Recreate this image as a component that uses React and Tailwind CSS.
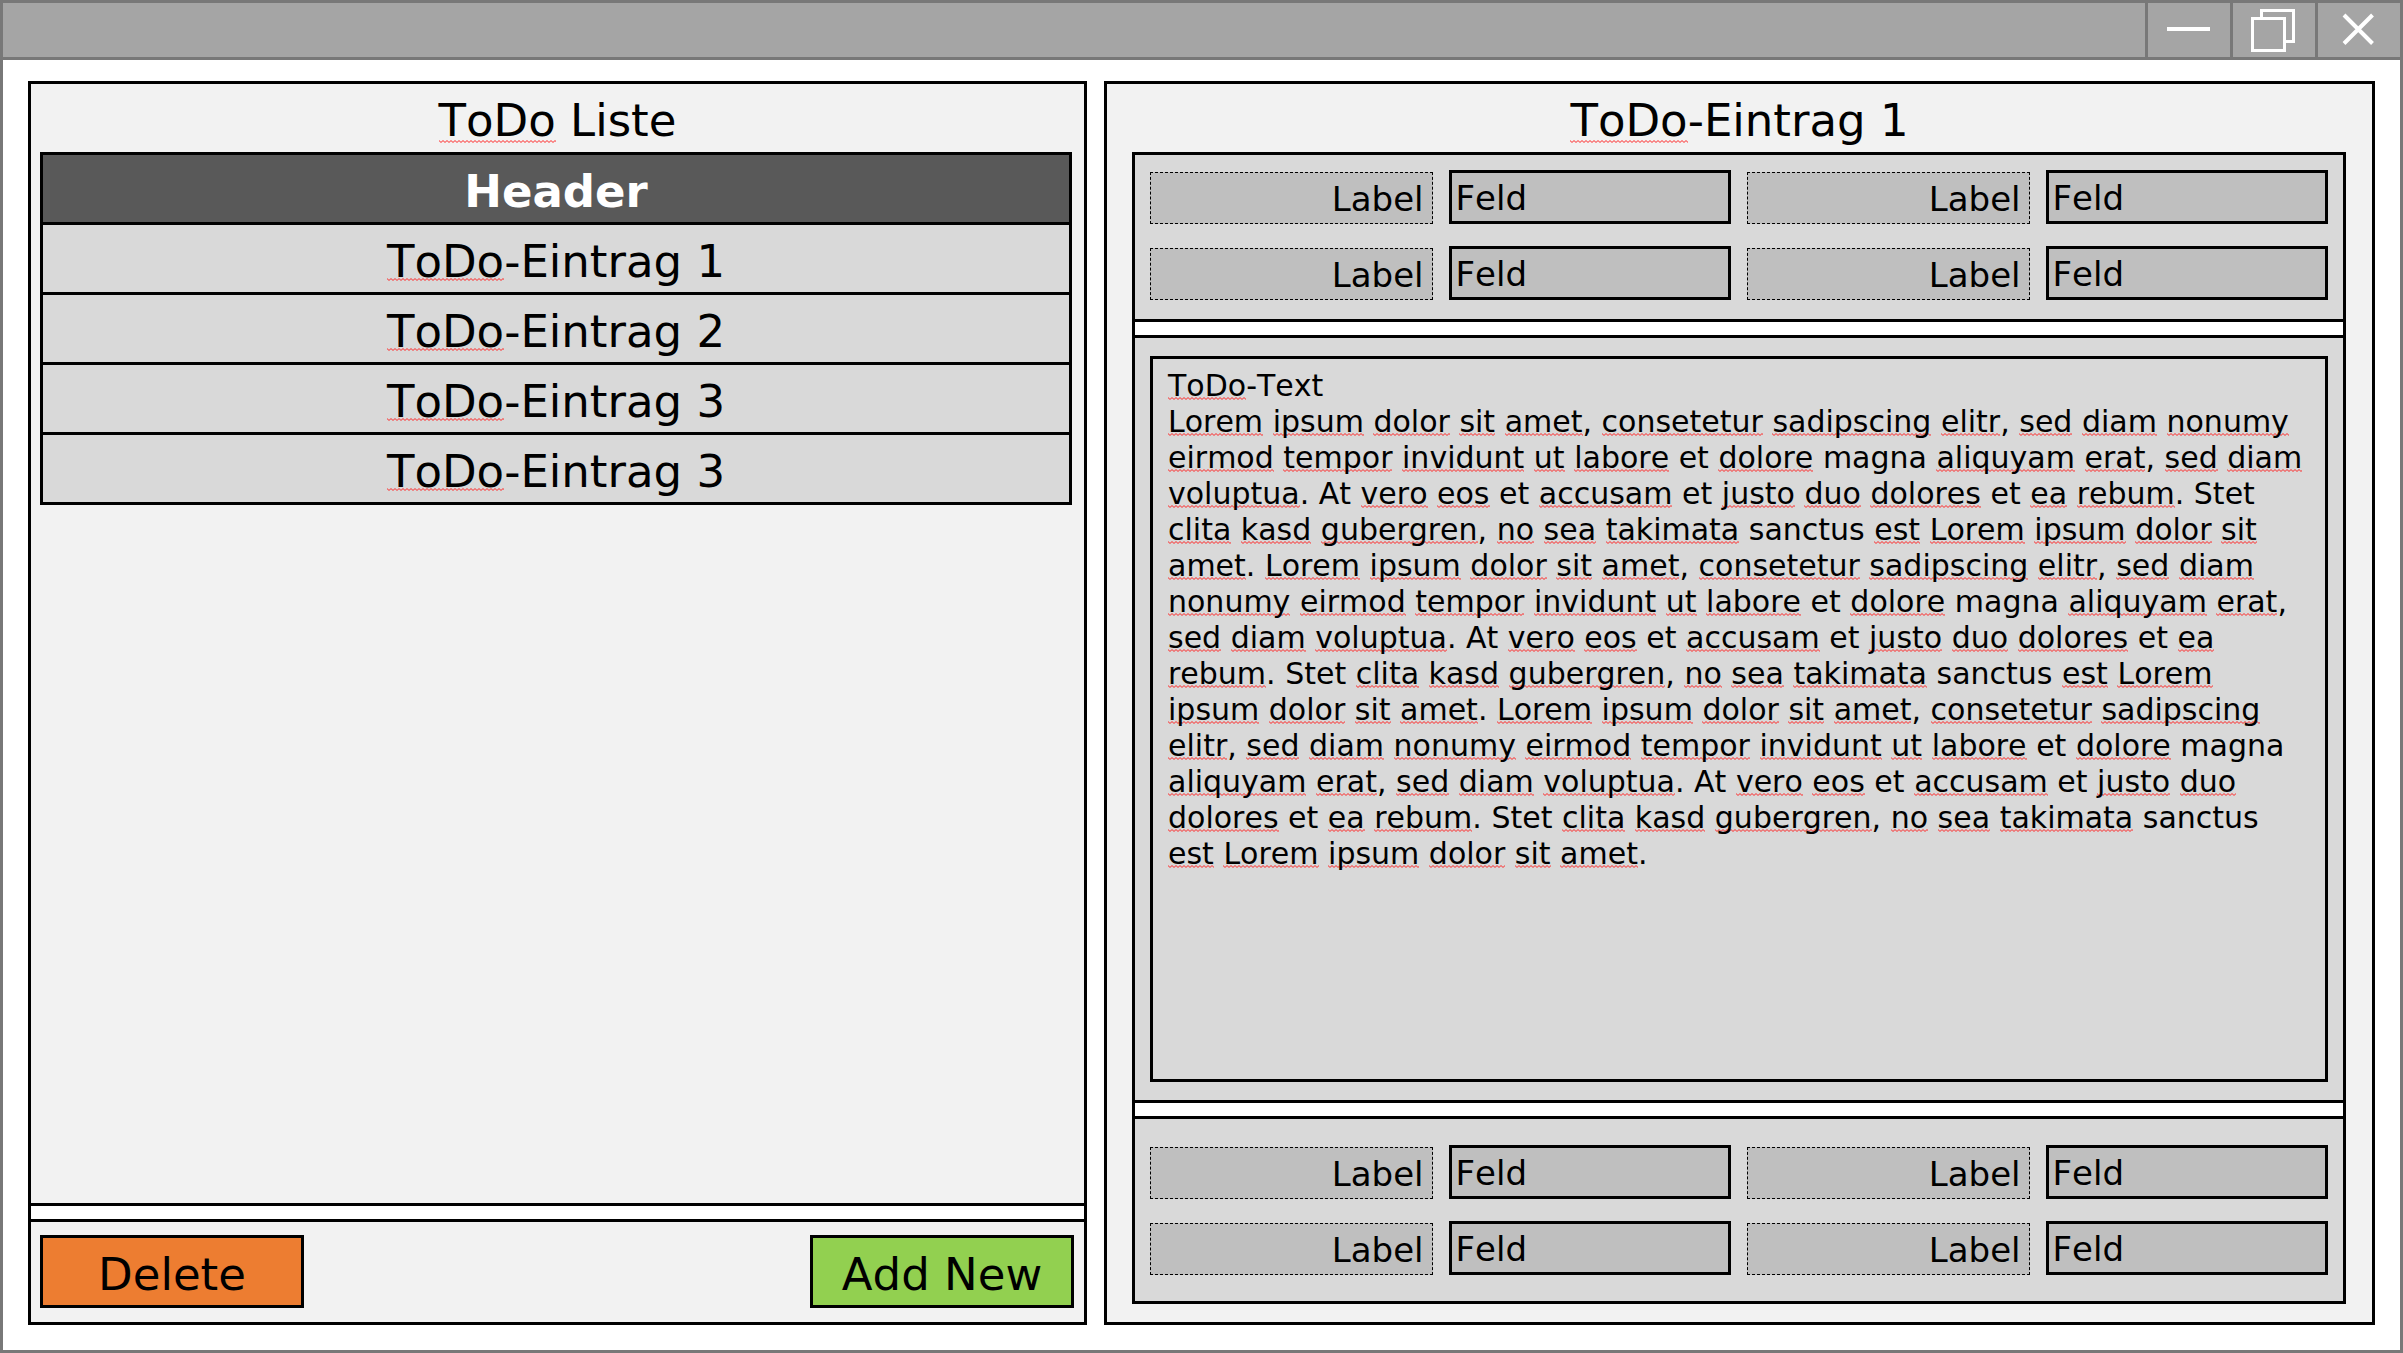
import React from "react";

const TEXT =
  "*Lorem *ipsum *dolor *sit *amet, *consetetur *sadipscing *elitr, *sed *diam *nonumy *eirmod *tempor *invidunt *ut *labore et *dolore magna *aliquyam *erat, *sed *diam *voluptua. At *vero *eos et *accusam et *justo *duo *dolores et *ea *rebum. Stet *clita *kasd *gubergren, *no *sea *takimata sanctus *est *Lorem *ipsum *dolor *sit *amet. *Lorem *ipsum *dolor *sit *amet, *consetetur *sadipscing *elitr, *sed *diam *nonumy *eirmod *tempor *invidunt *ut *labore et *dolore magna *aliquyam *erat, *sed *diam *voluptua. At *vero *eos et *accusam et *justo *duo *dolores et *ea *rebum. Stet *clita *kasd *gubergren, *no *sea *takimata sanctus *est *Lorem *ipsum *dolor *sit *amet. *Lorem *ipsum *dolor *sit *amet, *consetetur *sadipscing *elitr, *sed *diam *nonumy *eirmod *tempor *invidunt *ut *labore et *dolore magna *aliquyam *erat, *sed *diam *voluptua. At *vero *eos et *accusam et *justo *duo *dolores et *ea *rebum. Stet *clita *kasd *gubergren, *no *sea *takimata sanctus *est *Lorem *ipsum *dolor *sit *amet.";

const ENTRIES = ["-Eintrag 1", "-Eintrag 2", "-Eintrag 3", "-Eintrag 3"];

/* The zigzag tile repeats just below the text's baseline. */
function Misspelled({ children }) {
  return (
    <span className="bg-[url('data:image/svg+xml,%3Csvg%20xmlns=%22http://www.w3.org/2000/svg%22%20width=%224%22%20height=%223%22%3E%3Cpath%20d=%22M-1%201.5L0%20.5L2%202.5L4%20.5L5%201.5%22%20fill=%22none%22%20stroke=%22%23ff2020%22/%3E%3C/svg%3E')] bg-repeat-x [background-position:0_calc(0.93em+1px)]">
      {children}
    </span>
  );
}

/* Words that start with an asterisk get a spelling mark. */
function Proofed({ text }) {
  return text.split(" ").map((word, i) => {
    const match = word.match(/^\*(\w+)(.*)$/);
    return (
      <React.Fragment key={i}>
        {i > 0 && " "}
        {match ? (
          <>
            <Misspelled>{match[1]}</Misspelled>
            {match[2]}
          </>
        ) : (
          word
        )}
      </React.Fragment>
    );
  });
}

function WindowButton({ label, children }) {
  return (
    <button type="button" aria-label={label} className="flex w-[85px] items-center justify-center border-l-3 border-[#787878]">
      <svg viewBox="0 0 82 54" className="h-[54px] w-[82px]" fill="none" stroke="#fff" strokeWidth="3">
        {children}
      </svg>
    </button>
  );
}

function TitleBar() {
  return (
    <header className="flex h-[57px] justify-end border-b-3 border-[#787878] bg-[#a5a5a5]">
      <WindowButton label="Minimize">
        <path d="M19 26H62" strokeWidth="4" />
      </WindowButton>
      <WindowButton label="Restore">
        <path d="M28.500 14V7.500H60.500V38.500H53" />
        <path d="M19.500 15.500H51.500V47.500H19.500Z" />
      </WindowButton>
      <WindowButton label="Close">
        <path d="M26 12L54.500 40.500M54.500 12L26 40.500" strokeWidth="4" />
      </WindowButton>
    </header>
  );
}

function Divider() {
  return <div className="h-[19px] shrink-0 border-y-3 border-black bg-white" />;
}

function Title({ children }) {
  return <h1 className="flex h-[68px] shrink-0 items-center justify-center pt-1 text-[45px] leading-none">{children}</h1>;
}

function FieldPair({ id }) {
  return (
    <>
      <label
        htmlFor={id}
        className="flex h-[52px] items-center justify-end border border-dashed border-black bg-[#bfbfbf] pt-0.5 pr-2 text-[34px] leading-none"
      >
        Label
      </label>
      <input
        id={id}
        type="text"
        defaultValue="Feld"
        className="h-[54px] w-full min-w-0 border-3 border-black bg-[#bfbfbf] pt-0.5 pl-1 text-[34px] leading-none outline-none"
      />
    </>
  );
}

function FieldGrid({ name, className }) {
  return (
    <div className={`grid shrink-0 grid-cols-4 items-end gap-x-4 gap-y-[22px] px-[15px] ${className}`}>
      {[1, 2, 3, 4].map((n) => (
        <FieldPair key={n} id={`${name}-${n}`} />
      ))}
    </div>
  );
}

function ListPanel() {
  return (
    <section className="flex min-w-0 flex-col border-3 border-black bg-[#f2f2f2]">
      <Title>
        <Misspelled>ToDo</Misspelled>&nbsp;Liste
      </Title>
      <div className="grow pr-3 pl-[9px]">
        <table className="w-full border-separate border-spacing-0 border-t-3 border-l-3 border-black text-center text-[45px] leading-none">
          <thead>
            <tr>
              <th scope="col" className="h-[70px] border-r-3 border-b-3 border-black bg-[#595959] p-0 pt-1.5 font-bold text-white">
                Header
              </th>
            </tr>
          </thead>
          <tbody>
            {ENTRIES.map((entry, i) => (
              <tr key={i}>
                <td className="h-[70px] border-r-3 border-b-3 border-black bg-[#d9d9d9] p-0 pt-1.5">
                  <Misspelled>ToDo</Misspelled>
                  {entry}
                </td>
              </tr>
            ))}
          </tbody>
        </table>
      </div>
      <Divider />
      <footer className="flex shrink-0 justify-between pt-[13px] pr-2.5 pb-3.5 pl-[9px] text-[45px] leading-none">
        <button type="button" className="h-[73px] w-[264px] border-3 border-black bg-[#ed7d31] pt-1.5">
          Delete
        </button>
        <button type="button" className="h-[73px] w-[264px] border-3 border-black bg-[#92d050] pt-1.5">
          Add New
        </button>
      </footer>
    </section>
  );
}

function DetailPanel() {
  return (
    <section className="flex min-w-0 flex-col border-3 border-black bg-[#f2f2f2]">
      <Title>
        <Misspelled>ToDo</Misspelled>-Eintrag 1
      </Title>
      <div className="mr-[26px] mb-[18px] ml-[25px] flex grow flex-col border-3 border-black bg-[#d9d9d9]">
        <FieldGrid name="top" className="pt-[15px] pb-[19px]" />
        <Divider />
        <div className="flex grow flex-col px-[15px] py-[18px]">
          <div
            role="textbox"
            aria-multiline="true"
            aria-label="ToDo-Text"
            contentEditable
            suppressContentEditableWarning
            spellCheck={false}
            className="grow border-3 border-black px-[15px] py-[9px] text-[30px] leading-[36px] outline-none"
          >
            <p>
              <Misspelled>ToDo</Misspelled>-Text
            </p>
            <p>
              <Proofed text={TEXT} />
            </p>
          </div>
        </div>
        <Divider />
        <FieldGrid name="bottom" className="pt-[26px] pb-[26px]" />
      </div>
    </section>
  );
}

export default function App() {
  return (
    <div className="flex min-h-screen flex-col border-3 border-[#787878] bg-white font-['DejaVu_Sans',sans-serif] text-black [font-kerning:none]">
      <TitleBar />
      <main className="grid grow grid-cols-[1059fr_1271fr] gap-[17px] px-[25px] pt-[21px] pb-[25px]">
        <ListPanel />
        <DetailPanel />
      </main>
    </div>
  );
}
